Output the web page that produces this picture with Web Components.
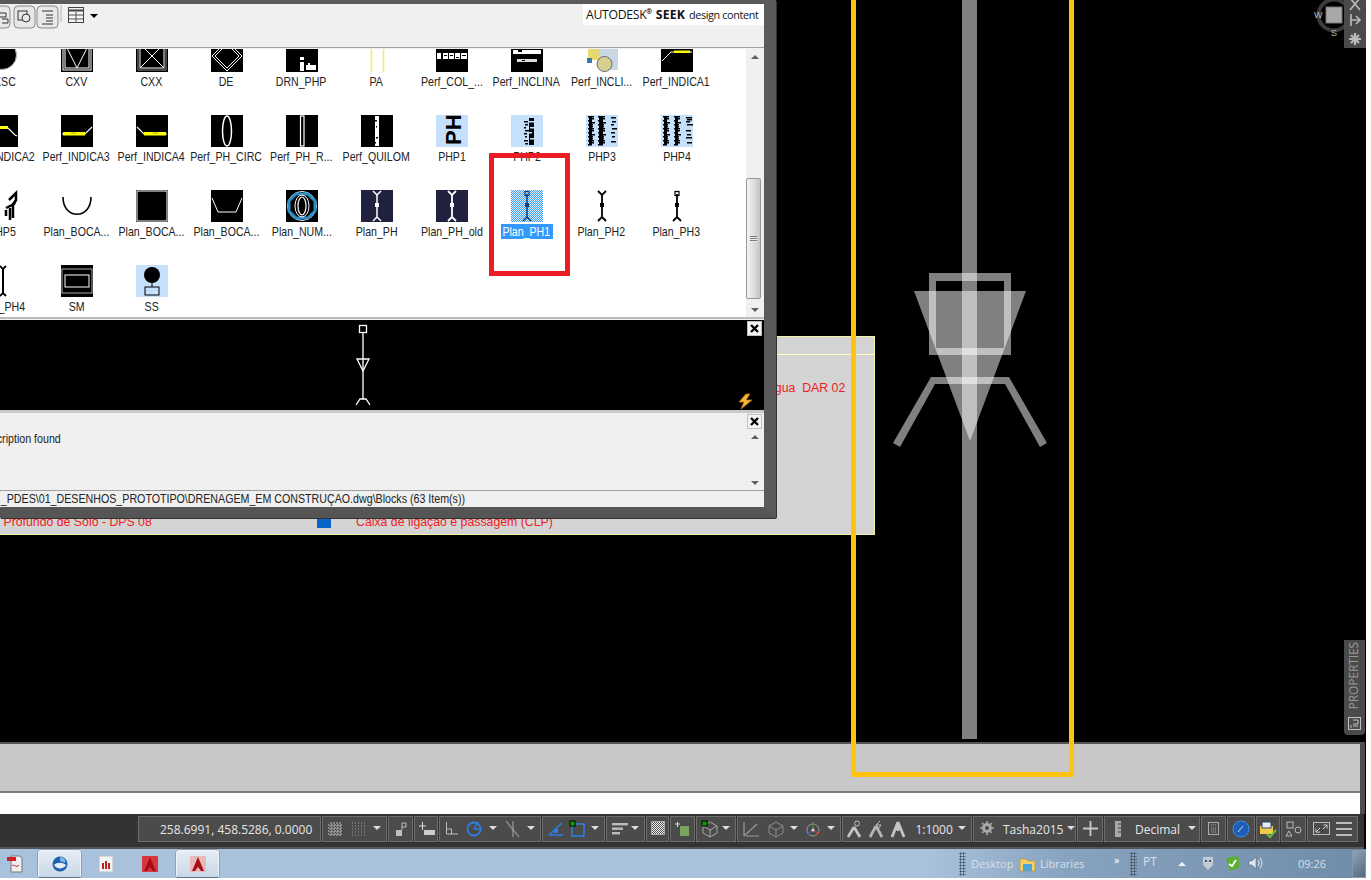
<!DOCTYPE html>
<html>
<head>
<meta charset="utf-8">
<title>Blocks palette</title>
<style>
  html, body { margin: 0; height: 100%; background: #fff; overflow: hidden; }
</style>
</head>
<body>
<cad-app>
  <cad-canvas slot="canvas">
    <block-palette></block-palette>
  </cad-canvas>
  <cad-command slot="command"></cad-command>
  <cad-status slot="status"></cad-status>
  <win-taskbar slot="taskbar"></win-taskbar>
</cad-app>

<script>
(function() {
  // small helper - every element gets an open shadow root from a string
  function mount(el, html) {
    const t = document.createElement('template')
    t.innerHTML = html
    el.attachShadow({ mode: 'open' }).appendChild(t.content.cloneNode(true))
    return el.shadowRoot
  }

  // --- thumbnails of the block list (32x32) ---
  const W = '#fff', K = '#000', Y = '#ff0'
  const sq = (c) => `<rect width="32" height="32" fill="${c}"/>`
  // the manhole symbol, top is a fork or a little square
  const symbol = (c, w, top) => `<g fill="none" stroke="${c}" stroke-width="${w}">
    <path d="M16 4V27M16 27L12 31M16 27L20 31"/>
    ${top === 'fork' ? '<path d="M12 1L16 5L20 1"/>' : '<rect x="14" y="1.500" width="4" height="4" stroke-width="1.200"/>'}
    <rect x="14.500" y="13.500" width="3" height="3" fill="${c}" stroke-width="1"/></g>`
  const noise = (c, x, ys, w) => ys.map((y, i) => `<rect x="${x + (i % 2)}" y="${y}" width="${w - (i % 3)}" height="1.5" fill="${c}"/>`).join('')
  const column = (x, w) => `<rect x="${x + 1}" y="1" width="${w - 3}" height="29" fill="${K}"/>` + noise(K, x, [1,3,5,7,9,11,13,15,17,19,21,23,25,27,29], w)
  const indica = (flip) => `<g ${flip ? 'transform="matrix(-1 0 0 1 32 0)"' : ''}>${sq(K)}
    <path d="M1 19H24L31 12" stroke="${W}" fill="none" stroke-width="1.200"/><rect x="2" y="17" width="22" height="3.500" fill="${Y}"/><rect x="10" y="17.500" width="5" height="1" fill="#aa0"/></g>`
  const THUMBS = {
    cxsc: `<circle cx="16" cy="15" r="14.500" fill="${K}" stroke="#bbb"/>`,
    cxv: `${sq(K)}<rect x="2" y="2" width="28" height="28" fill="none" stroke="${W}"/><rect x="4" y="4" width="24" height="24" fill="none" stroke="${W}"/><path d="M4 4L16 28L28 4" fill="none" stroke="${W}"/>`,
    cxx: `${sq(K)}<rect x="2" y="2" width="28" height="28" fill="none" stroke="#888"/><rect x="4" y="4" width="24" height="24" fill="none" stroke="${W}"/><path d="M4 4L28 28M28 4L4 28" stroke="${W}"/>`,
    de: `${sq(K)}<path d="M16 1L31 16L16 31L1 16ZM16 4L28 16L16 28L4 16Z" fill="none" stroke="${W}"/>`,
    drn: `${sq(K)}<rect x="14" y="17" width="4" height="14" fill="${W}"/><rect x="14" y="20" width="5" height="2" fill="${K}"/><rect x="20" y="25" width="10" height="5" fill="${W}"/><rect x="22" y="23" width="2" height="3" fill="${W}"/>`,
    pa: `<path d="M10.500 0V32M22.500 0V32" stroke="#f5f04a" stroke-width="1.500"/>`,
    col: `${sq(K)}<g fill="${W}"><rect x="1" y="13" width="4" height="6"/><rect x="7" y="13" width="5" height="6"/><rect x="13" y="13" width="5" height="6"/><rect x="19" y="13" width="5" height="6"/><rect x="25" y="13" width="6" height="6"/></g><g fill="${K}"><rect x="8" y="15" width="3" height="1"/><rect x="14" y="15" width="3" height="1"/><rect x="20" y="17" width="3" height="1"/><rect x="26" y="15" width="4" height="1"/></g>`,
    incl: `${sq(K)}<rect x="2" y="10" width="28" height="4" fill="${W}"/><rect x="7" y="10" width="4" height="2" fill="${K}"/><rect x="6" y="19" width="20" height="3" fill="#ddd"/><rect x="11" y="20" width="3" height="1" fill="${K}"/>`,
    incli: `<rect x="2" y="0" width="19" height="20" fill="#e8d870"/><rect x="14" y="8" width="18" height="22" fill="#c8d8e4"/><circle cx="18.500" cy="24" r="7.500" fill="#d8d090" stroke="#667"/><rect x="1" y="18" width="5" height="5" fill="#3a78a8"/>`,
    ind1: `${sq(K)}<path d="M1 21L10 12H31" fill="none" stroke="${W}"/><rect x="13" y="10.500" width="16" height="2.500" fill="${Y}"/>`,
    ind2: `${sq(K)}<rect x="0" y="11" width="22" height="3" fill="${Y}"/><path d="M22 13L29 20L31 21" stroke="${W}" fill="none" stroke-width="1.200"/>`,
    ind3: indica(false),
    ind4: indica(true),
    circ: `${sq(K)}<ellipse cx="16" cy="16" rx="4.500" ry="15" fill="none" stroke="${W}" stroke-width="1.500"/>`,
    rect: `${sq(K)}<rect x="14.500" y="1" width="3.500" height="30" fill="none" stroke="${W}" stroke-width="1.200"/>`,
    quil: `${sq(K)}<rect x="14" y="1" width="4" height="30" fill="${W}"/>${noise(K, 14, [5,11,16,22,27], 2)}`,
    php1: `${sq('#c5e0fb')}<text x="-30" y="25" transform="rotate(-90)" font-family="Liberation Sans, sans-serif" font-weight="700" font-size="22" fill="${K}">PH</text>`,
    php2: `${sq('#c5e0fb')}<rect x="18" y="3" width="5" height="27" fill="${K}"/>${noise(K, 13, [6,9,12,15,18,21,25,28], 4)}${noise('#c5e0fb', 18, [6,12,17,23], 5)}`,
    php3: `${sq('#c5e0fb')}${column(2, 6)}${column(12, 7)}${noise(K, 25, [2,6,9,13,17,21,26], 5)}`,
    php4: `${sq('#c5e0fb')}${column(2, 6)}${column(13, 6)}${noise(K, 25, [2,4,6,9,15,19,22,27], 6)}`,
    php5: `<path d="M5 10L12 3V10L9 14V28M2 18L10 14L12 10M2 20V26M6 18V30" fill="none" stroke="${K}" stroke-width="2.500" transform="translate(18 0)"/>`,
    boca1: `<path d="M2 7C2 30 30 30 30 7" fill="none" stroke="${K}" stroke-width="1.600"/>`,
    boca2: `${sq(K)}<rect x="1" y="1" width="30" height="30" fill="none" stroke="${W}"/>`,
    boca3: `${sq(K)}<path d="M1 8L7 22H25L31 8" fill="none" stroke="${W}"/>`,
    num: `${sq(K)}<circle cx="16" cy="16" r="14.500" fill="none" stroke="#dff"/><path d="M10 4H22L29 11V21L22 28H10L3 21V11Z" fill="none" stroke="#2b8cc4" stroke-width="3"/><ellipse cx="16" cy="16" rx="4" ry="9" fill="none" stroke="${W}" stroke-width="1.200"/><ellipse cx="16" cy="16" rx="7" ry="11" fill="none" stroke="${W}"/>`,
    ph: `${sq('#20203f')}${symbol(W, 1.500, 'fork')}`,
    phold: `${sq('#20203f')}${symbol(W, 1.800, 'fork')}`,
    ph1: `<defs><pattern id="chk" width="2" height="2" patternUnits="userSpaceOnUse"><rect width="2" height="2" fill="#fff"/><rect width="1" height="1" fill="#3399ff"/><rect x="1" y="1" width="1" height="1" fill="#3399ff"/></pattern></defs><rect width="32" height="32" fill="#6fb4f0"/><rect width="32" height="32" fill="url(#chk)" opacity=".8"/>${symbol('#123a78', 1.500, 'square')}`,
    ph2: symbol(K, 1.800, 'fork'),
    ph3: symbol(K, 1.800, 'square'),
    ph4: `<path d="M14 1L17 4V28L14 31M20 1L17 4M20 31L17 28" fill="none" stroke="${K}" stroke-width="1.800"/><rect x="16" y="3" width="2" height="26" fill="${K}"/>`,
    sm: `${sq(K)}<rect x="1" y="4" width="30" height="24" fill="none" stroke="#aaa"/><rect x="4" y="10" width="24" height="12" fill="none" stroke="${W}"/>`,
    ss: `${sq('#c5e0fb')}<circle cx="16" cy="10" r="8" fill="${K}"/><path d="M16 18V22" stroke="${K}"/><rect x="9" y="22" width="14" height="8" fill="#c5e0fb" stroke="${K}"/>`
  }

  // One entry of the list: thumbnail and its caption
  class BlockItem extends HTMLElement {
    constructor() {
      super()
      const sel = this.hasAttribute('selected')
      mount(this, `
        <style>
          :host { display: flex; flex-direction: column; align-items: center; height: 75px; overflow: visible; }
          svg { width: 32px; height: 32px; display: block; flex: none; overflow: hidden; }
          .cap {
            margin-top: 2px; width: ${sel ? 52 : 72}px; height: 15px; display: flex; justify-content: center;
            ${sel ? 'background: #3399ff; color: #fff;' : 'color: #222;'}
          }
          span { flex: none; white-space: nowrap; font: 13px/15px "Liberation Sans", sans-serif; transform: scaleX(.815); }
        </style>
        <svg viewBox="0 0 32 32">${THUMBS[this.getAttribute('thumb')] || ''}</svg>
        <div class="cap"><span><slot></slot></span></div>`)
    }
  }
  customElements.define('block-item', BlockItem)

  const ITEMS = [
    ['cxsc','CXSC'],['cxv','CXV'],['cxx','CXX'],['de','DE'],['drn','DRN_PHP'],['pa','PA'],['col','Perf_COL_...'],['incl','Perf_INCLINA'],['incli','Perf_INCLI...'],['ind1','Perf_INDICA1'],
    ['ind2','Perf_INDICA2'],['ind3','Perf_INDICA3'],['ind4','Perf_INDICA4'],['circ','Perf_PH_CIRC'],['rect','Perf_PH_R...'],['quil','Perf_QUILOM'],['php1','PHP1'],['php2','PHP2'],['php3','PHP3'],['php4','PHP4'],
    ['php5','PHP5'],['boca1','Plan_BOCA...'],['boca2','Plan_BOCA...'],['boca3','Plan_BOCA...'],['num','Plan_NUM...'],['ph','Plan_PH'],['phold','Plan_PH_old'],['ph1','Plan_PH1'],['ph2','Plan_PH2'],['ph3','Plan_PH3'],
    ['ph4','Plan_PH4'],['sm','SM'],['ss','SS']
  ]

  // Vertical scrollbar of the palette panes. thumb attribute = "top,height"
  class PaneScroll extends HTMLElement {
    constructor() {
      super()
      const thumb = this.getAttribute('thumb')
      const [top, h] = thumb ? thumb.split(',') : [0, 0]
      mount(this, `
        <style>
          :host { display: block; position: relative; width: 18px; background: #f0f0f0; flex: none; }
          .up, .down { position: absolute; left: 5px; width: 0; height: 0; border: 4px solid transparent; }
          .up { top: 6px; border-bottom: 4px solid #606060; border-top: 0; }
          .down { bottom: 5px; border-top: 4px solid #606060; border-bottom: 0; }
          .thumb { position: absolute; left: 0; width: 13px; border: 1px solid #999; border-radius: 2px;
            background: linear-gradient(90deg, #f4f4f4, #dcdcdc 55%, #c4c4c4); }
          .grip { position: absolute; left: 3px; top: 50%; margin-top: -3px; width: 7px; height: 6px;
            background: repeating-linear-gradient(#777 0 1px, #eee 1px 2px); }
        </style>
        <div class="up"></div>
        ${thumb ? `<div class="thumb" style="top:${top}px;height:${h}px"><div class="grip"></div></div>` : ''}
        <div class="down"></div>`)
    }
  }
  customElements.define('pane-scroll', PaneScroll)

  // The small X box in the corner of the preview and description panes
  class PaneClose extends HTMLElement {
    constructor() {
      super()
      mount(this, `
        <style>
          :host { position: absolute; right: 2px; top: 1px; width: 15px; height: 15px; background: #f4f4f4; border: 1px solid #c0c0c0; box-sizing: border-box; display: block; }
          svg { display: block; width: 13px; height: 13px; }
        </style>
        <svg viewBox="0 0 13 13"><path d="M3 3L10 10M10 3L3 10" stroke="#000" stroke-width="2.400"/></svg>`)
    }
  }
  customElements.define('pane-close', PaneClose)

  // The palette window. Floats over the drawing, left part is off screen
  class BlockPalette extends HTMLElement {
    constructor() {
      super()
      const items = ITEMS.map(([t, n]) => `<block-item thumb="${t}" ${n === 'Plan_PH1' ? 'selected' : ''}>${n}</block-item>`).join('')
      mount(this, `
        <style>
          :host {
            position: absolute; left: 0; top: 0; width: 776px; height: 518px; box-sizing: border-box; display: flex; flex-direction: column;
            background: #f0f0f0; border-top: 4px solid #5a5a5a; border-right: 12px solid #5a5a5a; border-bottom: 11px solid #555;
            box-shadow: 1px 1px 0 #333; border-bottom-right-radius: 2px; overflow: visible;
            font: 13px "Liberation Sans", sans-serif; color: #222;
          }
          .tools { height: 43px; flex: none; display: flex; align-items: flex-start; position: relative; border-bottom: 1px solid #a0a0a0; box-sizing: content-box; }
          .tools svg { display: block; flex: none; }
          .seek { margin-left: auto; background: #fff; height: 21px; padding: 0 3px 0 3px; width: 175px; display: flex; align-items: center; white-space: nowrap;
            font: 12.3px "Open Sans", "Liberation Sans", sans-serif; color: #111; letter-spacing: -.35px; }
          .seek b { margin: 0 4px 0 4px; font-weight: 700; letter-spacing: .1px; }
          .seek sup { font-size: 7px; line-height: 0; font-weight: 700; }
          .seek small { font-size: 10.8px; }
          .list { height: 268px; flex: none; display: flex; background: #fff; margin-top: 1px; border-bottom: 2px solid #bbb; position: relative; }
          .view { flex: 1; overflow: hidden; min-width: 0; }
          .grid { display: grid; grid-template-columns: repeat(10, 75px); margin: -9px 0 0 -36px; width: 750px; }
          .mark { position: absolute; left: 489px; top: 104px; width: 81px; height: 123px; box-sizing: border-box; border: 5px solid #ec1c24; }
          .preview { height: 90px; flex: none; background: #000; position: relative; margin-top: 1px; border-bottom: 3px solid #c8c8c8; }
          .preview svg.sym { position: absolute; left: 351px; top: 4px; }
          .preview svg.bolt { position: absolute; left: 737px; top: 73px; }
          .desc { flex: 1; display: flex; position: relative; min-height: 0; border-bottom: 1px solid #a0a0a0; }
          .desc p { flex: 1; margin: 18px 0 0 -37px; white-space: nowrap; line-height: 15px; transform: scaleX(.82); transform-origin: 0 0; }
          .path { height: 16px; flex: none; line-height: 16px; padding-left: 1px; white-space: nowrap; transform: scaleX(.82); transform-origin: 0 0; }
        </style>
        <div class="tools">
          <svg width="100" height="28" viewBox="0 0 100 28" fill="none" stroke="#333">
            <rect x="-12" y="2" width="22" height="22" rx="4" fill="#e8e8e8" stroke="#8a8a8a"/>
            <path d="M0 9H6V13H0M2 15H8V19H2" />
            <rect x="14" y="2" width="21" height="22" rx="4" fill="#e8e8e8" stroke="#8a8a8a"/>
            <rect x="18" y="7" width="9" height="9"/><circle cx="26" cy="14" r="4" fill="#e8e8e8"/>
            <rect x="37" y="2" width="21" height="22" rx="4" fill="#e8e8e8" stroke="#8a8a8a"/>
            <path d="M42 7H53M46 11H53M46 14H53M46 17H53M42 20H53"/>
            <path d="M61 1V18" stroke="#b5b5b5"/>
            <rect x="68.500" y="3.500" width="15" height="15" stroke="#444" fill="#f4f4f4"/>
            <path d="M69 6.500H83" stroke="#444" stroke-width="2"/>
            <path d="M69 11H83M69 15H83M76 8V18" stroke="#555"/>
            <path d="M90 10H98L94 14Z" fill="#000" stroke="none"/>
          </svg>
          <div class="seek"><span>AUTODESK<sup>®</sup></span><b>SEEK</b><small>design content</small></div>
        </div>
        <div class="list">
          <div class="view"><div class="grid">${items}</div></div>
          <pane-scroll thumb="129,119"></pane-scroll>
          <div class="mark"></div>
        </div>
        <div class="preview">
          <svg class="sym" width="24" height="85" viewBox="0 0 24 85" fill="none" stroke="#fff" stroke-width="1.300">
            <rect x="8.500" y="1.500" width="7" height="7"/><path d="M12 8V75M12 75H9L5 81M12 75H15L19 81"/>
            <path d="M6 35H18L12 47Z"/>
          </svg>
          <svg class="bolt" width="17" height="17" viewBox="0 0 17 17">
            <path d="M9 1L2 9H7L4 16L15 7H9L13 1Z" fill="#f7b733" stroke="#b8741a" stroke-width=".8"/>
          </svg>
          <pane-close></pane-close>
        </div>
        <div class="desc">
          <p>No description found</p>
          <pane-scroll style="margin-top:16px"></pane-scroll>
          <pane-close></pane-close>
        </div>
        <div class="path">_PDES\\01_DESENHOS_PROTOTIPO\\DRENAGEM_EM CONSTRUÇAO.dwg\\Blocks (63 Item(s))</div>`)
    }
  }
  customElements.define('block-palette', BlockPalette)

  // --------
  // Model space. Things in here sit at their drawing coordinates
  class CadCanvas extends HTMLElement {
    constructor() {
      super()
      mount(this, `
        <style>
          :host { display: block; height: 742px; position: relative; background: #000; z-index: 1; }
          .legend { position: absolute; left: -2px; top: 336px; width: 877px; height: 199px; box-sizing: border-box; background: #d4d4d4;
            border: 1px solid #f3f3a0; font: 12.3px "Liberation Sans", sans-serif; color: #ee1c25; }
          .legend i { position: absolute; left: 0; right: 0; top: 17px; height: 1px; background: #ffffc0; }
          .legend span { position: absolute; white-space: nowrap; }
          .blue { position: absolute; left: 318px; top: 179px; width: 14px; height: 12px; background: #0a64c8; }
          .frame { position: absolute; left: 851px; top: -12px; width: 223px; height: 789px; box-sizing: border-box; border: 5px solid #ffc20e; }
          .axis { position: absolute; left: 962px; top: 0; width: 15px; height: 739px; background: #808080; }
          svg.sym { position: absolute; left: 880px; top: 260px; }
          .strip { position: absolute; right: 0; top: 0; width: 22px; height: 48px; background: #4a4a4a; }
          svg.nav { position: absolute; left: 1310px; top: -6px; }
          .nav-l { font: 9px "Liberation Sans", sans-serif; fill: #bbb; }
          .tab { position: absolute; left: 1344px; top: 640px; width: 21px; height: 95px; background: #4a4a4a; border-radius: 0 0 4px 4px; box-sizing: border-box; }
          .tab span { position: absolute; left: 2px; bottom: 26px; writing-mode: vertical-rl; transform: rotate(180deg); font: 12px "Open Sans", "Liberation Sans", sans-serif; color: #9a9a9a; line-height: 16px; white-space: nowrap; letter-spacing: -.1px; }
          .tab svg { position: absolute; left: 4px; bottom: 5px; }
        </style>
        <div class="legend">
          <i></i>
          <span style="left:769px;top:44px">água&nbsp; DAR 02</span>
          <span style="left:-27px;top:178px">Poço Profundo de Solo - DPS 08</span>
          <div class="blue"></div>
          <span style="left:357px;top:178px">Caixa de ligação e passagem (CLP)</span>
        </div>
        <div class="axis"></div>
        <svg class="sym" width="180" height="200" viewBox="880 260 180 200" fill="#fff" fill-opacity=".5">
          <path d="M929 273H1011V355H929ZM936 281V348H1004V281Z" fill-rule="evenodd"/>
          <path d="M914 291H1026L970 441Z"/>
          <path d="M931 377H1009L1047 443L1040 447L1005 384H935L900 447L893 443Z"/>
        </svg>
        <div class="frame"></div>
        <svg class="nav" width="50" height="46" viewBox="1310 -6 50 46">
          <circle cx="1334" cy="15" r="15.500" fill="none" stroke="#3c3c3c" stroke-width="4"/>
          <rect x="1326" y="7" width="16" height="16" fill="#a8a8a8" stroke="#777"/>
          <text class="nav-l" x="1314" y="18">W</text><text class="nav-l" x="1331" y="36">S</text>
        </svg>
        <div class="strip">
          <svg width="22" height="48" viewBox="0 0 22 48" fill="none" stroke="#bbb" stroke-width="1.600">
            <path d="M6 -2L11 4L16 -2M6 10L11 4L16 10"/>
            <path d="M7 14V26M7 20H15M12 16L16 20L12 24"/>
            <path d="M11 33V45M5 39H17M7 35L15 43M15 35L7 43" stroke-width="2.200"/>
          </svg>
        </div>
        <div class="tab">
          <span>PROPERTIES</span>
          <svg width="13" height="13" viewBox="0 0 13 13" fill="none" stroke="#c0c0c0"><rect x=".5" y=".5" width="12" height="12"/><path d="M5 3H10V7H5M3 8V11M5 9H10"/></svg>
        </div>
        <slot></slot>`)
    }
  }
  customElements.define('cad-canvas', CadCanvas)

  // The empty command line area under the drawing
  class CadCommand extends HTMLElement {
    constructor() {
      super()
      mount(this, `
        <style>
          :host { display: block; background: #555; border-top: 2px solid #555; border-right: 5px solid #4c4c4c; margin-right: 1px; }
          .hist { height: 47px; background: #c8c8c8; border-bottom: 2px solid #7a7a7a; }
          .line { height: 21px; background: #fff; }
        </style>
        <div class="hist"></div><div class="line"></div>`)
    }
  }
  customElements.define('cad-command', CadCommand)

  // --------
  // Status bar icons, all stroked on the dark bar
  const G = '#bdbdbd', B = '#2f7ee0'
  const STAT = {
    arrow: [8, `<path d="M0 5H8L4 9Z" fill="#ddd"/>`],
    grid: [16, `<path d="M3 1V15M6 1V15M9 1V15M12 1V15M0 4H15M0 7H15M0 10H15M0 13H15" stroke="${G}" stroke-dasharray="2 1"/>`],
    dots: [16, `<path d="M1 2H15M1 5H15M1 8H15M1 11H15M1 14H15" stroke="#a0a0a0" stroke-dasharray="1 2"/>`],
    snap: [10, `<rect x="0" y="9" width="6" height="6" fill="${G}"/><path d="M6 9V2H10V6H6" fill="none" stroke="${G}"/>`],
    plus: [18, `<path d="M1 5H8M4.500 1V9" stroke="#ddd"/><rect x="6" y="9" width="11" height="5" fill="#ccc"/>`],
    ortho: [14, `<path d="M1.500 1V13H13M1.500 8H6.500V13" fill="none" stroke="${G}"/>`],
    polar: [16, `<circle cx="8" cy="8" r="6.500" fill="none" stroke="${B}" stroke-width="1.800"/><path d="M8 8H16M8 8L12 1" stroke="${B}" stroke-width="1.400"/>`],
    slash: [16, `<path d="M2 0L15 16" stroke="#888" stroke-width="1.600"/><path d="M9 0V16" stroke="#aaa"/>`],
    angle: [16, `<path d="M1 14H15M1 14L14 2" stroke="${B}" stroke-width="1.600"/><rect x="6" y="8" width="4" height="4" fill="${B}"/>`],
    box: [16, `<rect x="2" y="3" width="12" height="12" fill="none" stroke="${B}" stroke-width="1.600"/><rect x="0" y="0" width="5" height="5" fill="#0a0"  stroke="#000"/>`],
    lines: [16, `<rect x="0" y="2" width="16" height="2.400" fill="${G}"/><rect x="0" y="6.500" width="11" height="2.400" fill="${G}"/><rect x="0" y="11" width="8" height="2.400" fill="${G}"/>`],
    check: [14, `<defs><pattern id="c" width="2" height="2" patternUnits="userSpaceOnUse"><rect width="2" height="2" fill="#eee"/><rect width="1" height="1" fill="#555"/><rect x="1" y="1" width="1" height="1" fill="#555"/></pattern></defs><rect x=".5" y=".5" width="13" height="13" fill="url(#c)" stroke="#aaa"/>`],
    layer: [16, `<path d="M0 3H5M2.500 1V6" stroke="#ddd"/><rect x="5" y="5" width="9" height="10" fill="#7aa35c"/>`],
    cube: [16, `<path d="M8 1L15 5V12L8 16L1 12V5ZM1 5L8 9L15 5M8 9V16" fill="none" stroke="#a8a8a8"/><rect x="0" y="0" width="5" height="5" fill="#0a0" stroke="#000"/>`],
    stack: [18, `<path d="M1 1V15M1 15L14 3M3 15H16" stroke="#999" stroke-width="1.200"/>`],
    cube2: [16, `<path d="M8 1L15 5V12L8 16L1 12V5ZM1 5L8 9L15 5M8 9V16" fill="none" stroke="#8c8c8c"/>`],
    axis: [16, `<path d="M8 3A6 6 0 1 1 7.900 3" fill="none" stroke="#999"/><path d="M8 1V8" stroke="#3a3"/><path d="M8 9L14 13" stroke="#d33" stroke-width="1.400"/><path d="M8 9L2 13" stroke="#36c" stroke-width="1.400"/><circle cx="8" cy="9" r="1.500" fill="#ddd"/>`],
    man1: [17, `<path d="M8 6L2 16M8 6L14 16" stroke="#c4c4c4" stroke-width="2.800"/><circle cx="11" cy="2.500" r="2.500" fill="none" stroke="#c4c4c4"/>`],
    man2: [17, `<path d="M8 5L2 16M8 5L14 16" stroke="#b4b4b4" stroke-width="2.800"/><path d="M12 0L8 4H13L10 8" stroke="#c4c4c4" fill="none"/>`],
    man3: [16, `<path d="M8 1L2 16M8 1L14 16M8 1V10" stroke="#c4c4c4" stroke-width="2.800"/>`],
    gear: [14, `<circle cx="7" cy="7" r="3.500" fill="none" stroke="#aaa" stroke-width="3"/><path d="M7 0V14M0 7H14M2 2L12 12M12 2L2 12" stroke="#aaa" stroke-width="1.600" stroke-dasharray="2 10 2"/>`],
    cross: [15, `<path d="M7.500 0V15M0 7.500H15" stroke="#c8c8c8" stroke-width="1.800"/>`],
    ruler: [6, `<rect x="0" y="0" width="6" height="16" fill="#a8a8a8"/><path d="M3 3H6M3 7H6M3 11H6" stroke="#444"/>`],
    calc: [11, `<rect x=".5" y="1.500" width="10" height="12" fill="none" stroke="#aaa"/><path d="M3 4H8M3 7H8M3 9H8M3 11H8" stroke="#aaa" stroke-dasharray="1 1"/>`],
    on: [20, `<circle cx="10" cy="8" r="8" fill="#1d5fb5" stroke="#3f8ae8"/><path d="M7 11L12 5" stroke="#cfe3ff" stroke-width=".9"/>`],
    yellow: [18, `<rect x="1" y="5" width="13" height="8" fill="#f4c94a"/><rect x="3" y="1" width="9" height="6" fill="#e6edf5" stroke="#2c4a78"/><path d="M8 13L11 16L17 9" stroke="#5cc23c" stroke-width="2" fill="none"/>`],
    shapes: [16, `<rect x="2" y="1" width="6" height="6" fill="none" stroke="#bbb"/><circle cx="13" cy="9" r="3" fill="none" stroke="#bbb"/><path d="M4 10L7 15H1Z" fill="none" stroke="#bbb"/>`],
    expand: [17, `<rect x=".5" y="1.500" width="16" height="12" fill="none" stroke="#bbb"/><path d="M3 11L7 7M3 7.500V11H7M14 4L10 8M10.500 4H14V7.500" stroke="#ddd"/>`],
    menu: [16, `<path d="M0 2H16M0 8H16M0 14H16" stroke="#bbb" stroke-width="2"/>`]
  }

  class StatIcon extends HTMLElement {
    constructor() {
      super()
      const [w, body] = STAT[this.getAttribute('name')]
      mount(this, `
        <style>
          :host { display: block; flex: none; }
          svg { display: block; overflow: visible; }
        </style>
        <svg width="${w}" height="16" viewBox="0 0 ${w} 16">${body}</svg>`)
    }
  }
  customElements.define('stat-icon', StatIcon)

  // One boxed group of the status bar, contents come through the slot
  class StatGroup extends HTMLElement {
    constructor() {
      super()
      mount(this, `
        <style>
          :host { display: flex; align-items: center; justify-content: space-between; box-sizing: border-box; height: 26px; flex: none;
            padding: 0 5px; background: #4b4b4b; border: 1px solid #6c6c6c; color: #e6e6e6; font: 12px "Open Sans", "Liberation Sans", sans-serif; white-space: nowrap; }
        </style>
        <slot></slot>`)
      this.style.width = this.getAttribute('w') + 'px'
      if (this.hasAttribute('pad')) this.style.padding = this.getAttribute('pad')
    }
  }
  customElements.define('stat-group', StatGroup)

  class CadStatus extends HTMLElement {
    constructor() {
      super()
      const i = (names) => names.split(' ').map((n) => `<stat-icon name="${n}"></stat-icon>`).join('')
      mount(this, `
        <style>
          :host { display: flex; height: 35px; box-sizing: border-box; padding: 2px 0 0 138px; gap: 1px; background: #333; border-bottom: 2px solid #555; margin-right: 2px; }
        </style>
        <stat-group w="183" pad="0 5px 0 21px"><span>258.6991, 458.5286, 0.0000</span></stat-group>
        <stat-group w="65">${i('grid dots arrow')}</stat-group>
        <stat-group w="25" pad="0 7px">${i('snap')}</stat-group>
        <stat-group w="24" pad="0 3px">${i('plus')}</stat-group>
        <stat-group w="102">${i('ortho polar arrow slash arrow')}</stat-group>
        <stat-group w="63">${i('angle box arrow')}</stat-group>
        <stat-group w="39">${i('lines arrow')}</stat-group>
        <stat-group w="23" pad="0 4px">${i('check')}</stat-group>
        <stat-group w="25" pad="0 4px">${i('layer')}</stat-group>
        <stat-group w="40">${i('cube arrow')}</stat-group>
        <stat-group w="104">${i('stack cube2 arrow axis arrow')}</stat-group>
        <stat-group w="130" pad="0 5px 0 3px">${i('man1 man2 man3')}<span style="margin-left:4px">1:1000</span>${i('arrow')}</stat-group>
        <stat-group w="103" pad="0 2px 0 6px" style="justify-content:flex-start">${i('gear')}<span style="margin:0 4px 0 9px">Tasha2015</span>${i('arrow')}</stat-group>
        <stat-group w="26" pad="0 5px">${i('cross')}</stat-group>
        <stat-group w="96" pad="0 3px 0 10px">${i('ruler')}<span style="margin-left:6px">Decimal</span>${i('arrow')}</stat-group>
        <stat-group w="25" pad="0 6px">${i('calc')}</stat-group>
        <stat-group w="28" pad="0 3px">${i('on')}</stat-group>
        <stat-group w="24" pad="0 2px">${i('yellow')}</stat-group>
        <stat-group w="25" pad="0 3px">${i('shapes')}</stat-group>
        <stat-group w="51">${i('expand menu')}</stat-group>`)
    }
  }
  customElements.define('cad-status', CadStatus)

  // --------
  // Windows taskbar
  const acad = (bg) => `<rect x="1" y="1" width="16" height="16" fill="${bg}"/><path d="M9 2L3 16H6L9 12L12 16H15Z" fill="#a50f18"/>`
  const TASK = {
    pdf: `<path d="M5 1H14L16 3V17H5Z" fill="#eee" stroke="#777"/><rect x="1" y="2" width="9" height="4" fill="#d21f2b"/><path d="M6 11C8 8 10 14 13 10" stroke="#d21f2b" fill="none"/>`,
    bird: `<circle cx="9" cy="9" r="7.500" fill="#1b62b2"/><path d="M3 10C6 7 11 7 15 10C13 14 6 15 3 10Z" fill="#e8eef5"/><path d="M9 2C13 2 15 5 14 8L9 6Z" fill="#7fb6e8"/>`,
    lib: `<rect x="2" y="1" width="14" height="16" fill="#f4f4f4" stroke="#bbb"/><rect x="5" y="8" width="2" height="6" fill="#b22"/><rect x="8" y="6" width="2" height="8" fill="#b22"/><rect x="11" y="8" width="2" height="6" fill="#b22"/>`,
    acad: acad('#d8383c'),
    acad2: acad('#e8b9bb'),
    folder: `<path d="M1 4H7L9 6H16V16H1Z" fill="#f3cf6a" stroke="#b58f2c" stroke-width=".6"/><rect x="4" y="9" width="9" height="7" fill="#4aa5d8"/>`,
    shield: `<path d="M3 2H13V10L8 15L3 10Z" fill="#c0ccd6"/><rect x="5" y="5" width="2" height="2" fill="#556"/><rect x="9" y="5" width="2" height="2" fill="#556"/>`,
    sec: `<path d="M2 3L14 1L16 12L6 16Z" fill="#58b030"/><path d="M5 9L8 11L12 5" stroke="#fff" stroke-width="1.800" fill="none"/>`,
    vol: `<path d="M2 6H5L9 2V14L5 10H2Z" fill="#dfe6ee" stroke="#556"  stroke-width=".5"/><path d="M11 5C12.500 7 12.500 9 11 11M13 3C15.500 6 15.500 10 13 13" stroke="#e8eef4" fill="none"/>`
  }

  class TaskIcon extends HTMLElement {
    constructor() {
      super()
      mount(this, `
        <style>
          :host { display: flex; align-items: center; justify-content: center; flex: none; box-sizing: border-box; height: 28px; }
          :host([active]) { background: linear-gradient(#e6edf5, #c8d7e7); border: 1px solid #eef3f8; border-bottom-color: #5d7389; border-radius: 3px; box-shadow: 0 0 0 .5px #6d8296; }
          svg { display: block; }
        </style>
        <svg width="18" height="18" viewBox="0 0 18 18">${TASK[this.getAttribute('name')]}</svg>`)
      this.style.width = (this.getAttribute('w') || 18) + 'px'
    }
  }
  customElements.define('task-icon', TaskIcon)

  class WinTaskbar extends HTMLElement {
    constructor() {
      super()
      mount(this, `
        <style>
          :host { display: flex; align-items: center; height: 29px; box-sizing: border-box; padding-left: 6px;
            background: linear-gradient(90deg, #a8c2dd 0, #a8c2dd 68%, #88a3bf 78%, #6f8ca8 100%);
            font: 11px "Open Sans", "Liberation Sans", sans-serif; color: #d6e0ea; white-space: nowrap; }
          .grip { width: 7px; height: 24px; flex: none; background-image: radial-gradient(#3d4d5d 45%, transparent 50%); background-size: 3px 3px; }
          .arr { width: 0; height: 0; border: 4px solid transparent; border-bottom: 4px solid #eef3f8; border-top: 0; flex: none; }
          .show { width: 14px; height: 28px; margin-left: auto; flex: none; box-sizing: border-box; border: 1px solid #8097ae; background: linear-gradient(135deg, #8da4bb, #56697d); }
        </style>
        <task-icon name="pdf" w="18"></task-icon>
        <task-icon name="bird" w="43" active style="margin-left:14px"></task-icon>
        <task-icon name="lib" style="margin-left:16px"></task-icon>
        <task-icon name="acad" style="margin-left:26px"></task-icon>
        <task-icon name="acad2" w="43" active style="margin-left:17px"></task-icon>
        <div class="grip" style="margin-left:740px"></div>
        <span style="margin-left:5px;width:46px">Desktop</span>
        <task-icon name="folder" style="margin-left:2px"></task-icon>
        <span style="margin-left:3px;width:48px">Libraries</span>
        <span style="margin-left:26px;width:11px;margin-top:-8px;color:#fff">»</span>
        <div class="grip" style="margin-left:5px"></div>
        <span style="margin-left:6px;width:18px;margin-top:-5px;font-size:12px">PT</span>
        <div class="arr" style="margin-left:17px"></div>
        <task-icon name="shield" style="margin-left:14px"></task-icon>
        <task-icon name="sec" style="margin-left:6px"></task-icon>
        <task-icon name="vol" style="margin-left:5px"></task-icon>
        <span style="margin-left:33px">09:26</span>
        <div class="show"></div>`)
    }
  }
  customElements.define('win-taskbar', WinTaskbar)

  // --------
  // The page itself: drawing, command area, status bar, taskbar stacked
  class CadApp extends HTMLElement {
    constructor() {
      super()
      mount(this, `
        <style>
          :host { display: flex; flex-direction: column; width: 1366px; height: 878px; background: #000; overflow: hidden; }
          ::slotted(*) { flex: none; }
        </style>
        <slot name="canvas"></slot>
        <slot name="command"></slot>
        <slot name="status"></slot>
        <slot name="taskbar"></slot>`)
    }
  }
  customElements.define('cad-app', CadApp)
})()
</script>
</body>
</html>
